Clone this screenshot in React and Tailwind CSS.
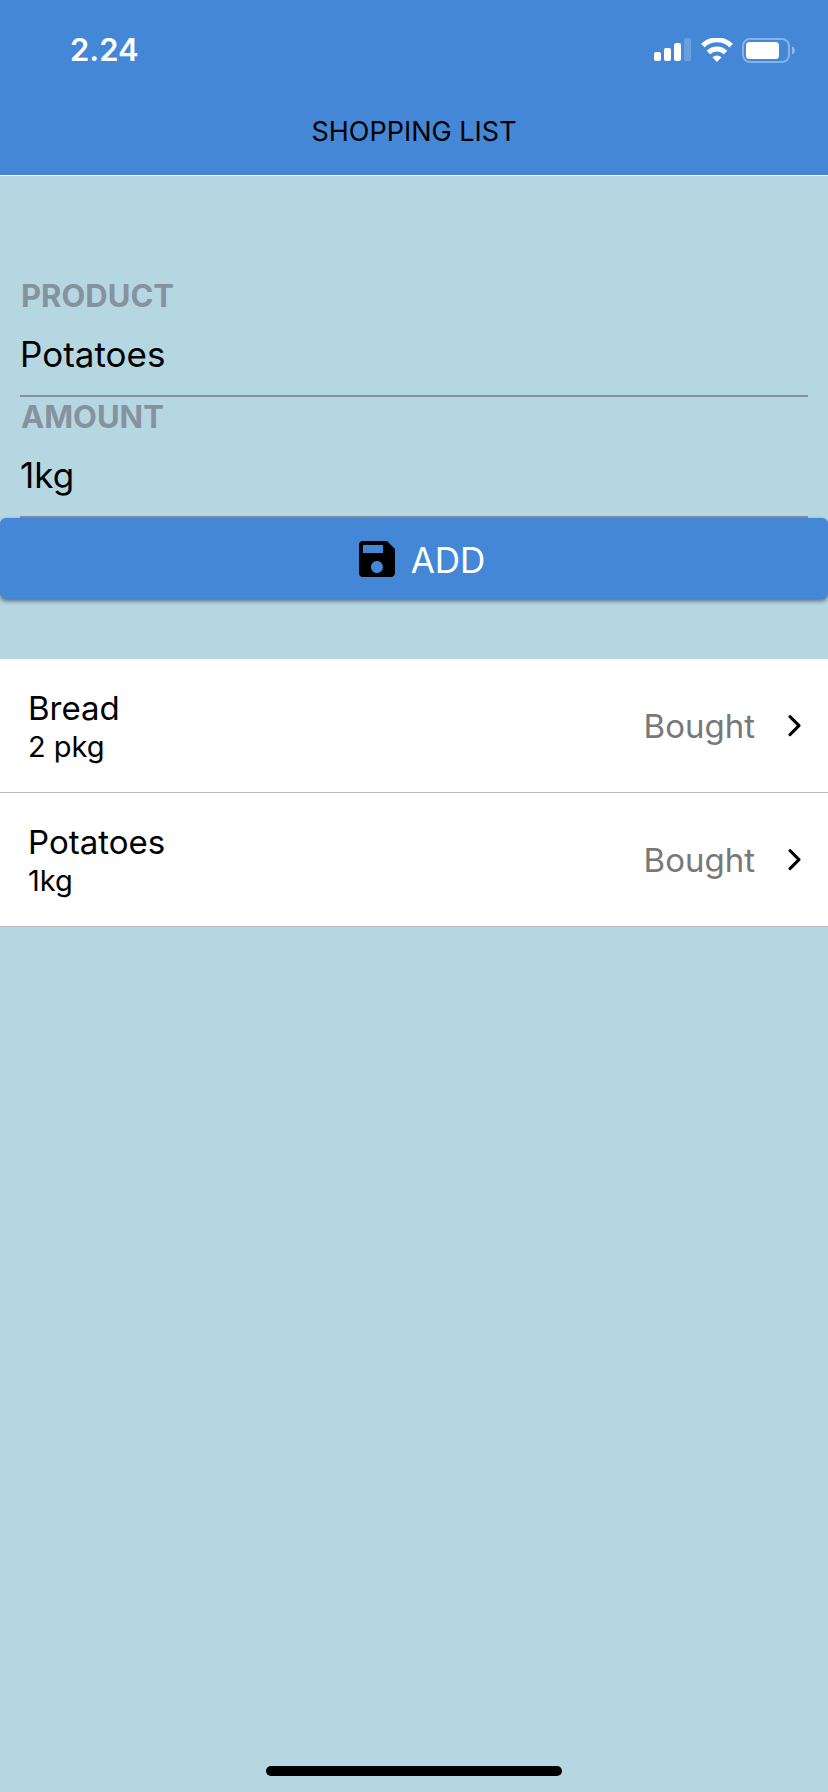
import { useState } from "react";
import { MdSave } from "react-icons/md";

const items = [
  { product: "Bread", amount: "2 pkg" },
  { product: "Potatoes", amount: "1kg" },
];

function SignalIcon() {
  return (
    <svg width="38" height="24" viewBox="0 0 38 24" fill="#fff" aria-hidden="true">
      <rect x="0" y="14" width="7" height="9" rx="2" />
      <rect x="10" y="10" width="7" height="13" rx="2" />
      <rect x="20" y="5" width="7" height="18" rx="2" />
      <rect x="30" y="0" width="7" height="23" rx="2" opacity="0.2" />
    </svg>
  );
}

function WifiIcon() {
  return (
    <svg width="32" height="24" viewBox="0 0 32 24" fill="none" stroke="#fff" strokeWidth="5" aria-hidden="true">
      <path d="M1.800 7.600a20.200 20.200 0 0 1 28.400 0" />
      <path d="M7.400 14.600a12.200 12.200 0 0 1 17.200 0" />
      <path d="M11.400 19.300a6.500 6.500 0 0 1 9.200 0L16 23.900z" fill="#fff" stroke="none" />
    </svg>
  );
}

function BatteryIcon() {
  return (
    <svg width="54" height="25" viewBox="0 0 54 25" aria-hidden="true">
      <rect x="1" y="1" width="46" height="23" rx="7" fill="none" stroke="#fff" strokeWidth="2" opacity="0.36" />
      <rect x="4" y="4" width="33" height="17" rx="3.5" fill="#fff" />
      <path d="M50 8.500v8c1.800-.6 3-2.200 3-4s-1.200-3.400-3-4z" fill="#fff" opacity="0.4" />
    </svg>
  );
}

function Field({ id, label, value, onChange }) {
  return (
    <div className="mx-5 flex flex-col border-b-2 border-[#86939e]">
      <label htmlFor={id} className="pl-px text-[31px] leading-10 font-bold text-[#86939e]">
        {label}
      </label>
      <input
        id={id}
        value={value}
        onChange={(e) => onChange(e.target.value)}
        className="h-[79px] w-full bg-transparent pb-1 text-[35px] text-black outline-none"
      />
    </div>
  );
}

export default function App() {
  const [product, setProduct] = useState("Potatoes");
  const [amount, setAmount] = useState("1kg");

  return (
    <div className="flex min-h-screen flex-col bg-[#b4d7e2] font-['Inter','Liberation_Sans',sans-serif] text-black">
      <header className="border-b border-white bg-[#4387d6]">
        <div className="flex h-[100px] items-center justify-between pr-8 pl-[70px] text-white">
          <span className="text-[31px] leading-10 font-semibold">2.24</span>
          <div className="flex items-center gap-[9px]">
            <SignalIcon />
            <WifiIcon />
            <BatteryIcon />
          </div>
        </div>
        <h1 className="h-[75px] pt-3 text-center text-[27px] leading-10 font-normal">SHOPPING LIST</h1>
      </header>

      <main className="flex-1">
        <form className="pt-[100px]" onSubmit={(e) => e.preventDefault()}>
          <Field id="product" label="PRODUCT" value={product} onChange={setProduct} />
          <Field id="amount" label="AMOUNT" value={amount} onChange={setAmount} />
          <button
            type="submit"
            className="flex h-[81px] w-full items-center justify-center gap-[10px] rounded-md bg-[#4387d6] pl-[10px] text-[35px] text-white shadow-[0_2px_4px_rgba(0,0,0,0.5)]"
          >
            <MdSave className="size-12 text-black" aria-hidden="true" />
            <span className="pt-[3px]">ADD</span>
          </button>
        </form>

        <ul className="mt-[60px]">
          {items.map((item) => (
            <li key={item.product} className="border-b border-[#bcbbc1] bg-white">
              <a href="#" className="flex h-[133px] items-center justify-between pr-[27px] pl-7">
                <span className="flex flex-col pt-0.5">
                  <span className="text-[33px] leading-10">{item.product}</span>
                  <span className="text-[29px] leading-[38px]">{item.amount}</span>
                </span>
                <span className="flex items-center gap-8">
                  <span className="text-[33px] leading-10 text-[#787878]">Bought</span>
                  <svg width="14" height="22" viewBox="0 0 14 22" fill="none" stroke="#000" strokeWidth="3" strokeLinecap="round" strokeLinejoin="round" aria-hidden="true">
                    <path d="M3 1.600l9 9-9 9" />
                  </svg>
                </span>
              </a>
            </li>
          ))}
        </ul>
      </main>

      <footer className="flex justify-center pb-4">
        <div className="h-[10px] w-[296px] rounded-full bg-black" />
      </footer>
    </div>
  );
}
